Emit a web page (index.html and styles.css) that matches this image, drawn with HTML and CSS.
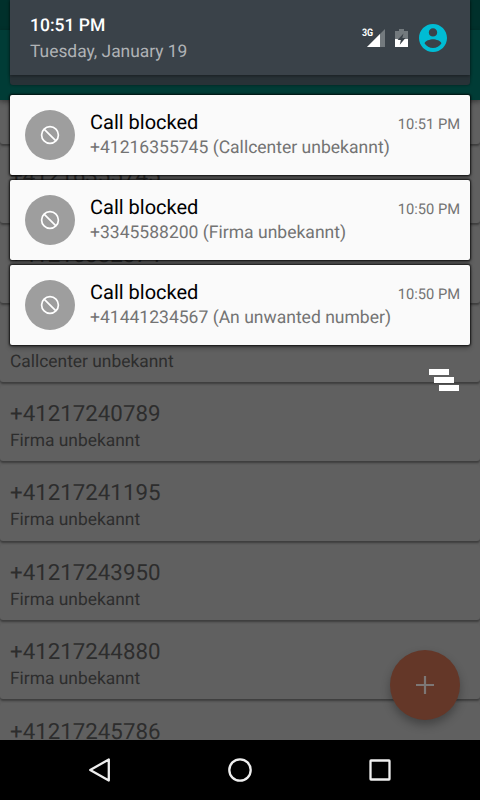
FILE: index.html
```
<!DOCTYPE HTML>
<html>
	<head>
		<title>Call Blocker</title>
		<meta charset="UTF-8">
		<link rel="stylesheet" href="styles.css">
	</head>

	<body>
		<div class="app">
			<div class="status-strip"></div>
			<div class="toolbar"></div>
			<div class="list">
				<div class="entry"></div>
				<div class="entry">
					<div class="number">+41216355745</div>
				</div>
				<div class="entry">
					<div class="number">+41216382374</div>
				</div>
				<div class="entry">
					<div class="number"></div>
					<div class="name">Callcenter unbekannt</div>
				</div>
				<div class="entry">
					<div class="number">+41217240789</div>
					<div class="name">Firma unbekannt</div>
				</div>
				<div class="entry">
					<div class="number">+41217241195</div>
					<div class="name">Firma unbekannt</div>
				</div>
				<div class="entry">
					<div class="number">+41217243950</div>
					<div class="name">Firma unbekannt</div>
				</div>
				<div class="entry">
					<div class="number">+41217244880</div>
					<div class="name">Firma unbekannt</div>
				</div>
				<div class="entry">
					<div class="number">+41217245786</div>
				</div>
			</div>
			<div class="fab">
				<svg width="18" height="18" viewBox="0 0 18 18"><path d="M9 0v18M0 9h18" stroke="#7d7775" stroke-width="2.2"/></svg>
			</div>
		</div>

		<!-- notification shade -->
		<div class="shade">
			<div class="header">
				<div class="header-main">
					<div class="clock">
						<div class="time">10:51 PM</div>
						<div class="date">Tuesday, January 19</div>
					</div>
					<div class="icons">
						<span class="network">3G</span>
						<svg class="signal" width="18" height="18" viewBox="0 0 18 18">
							<path d="M18 0V18H0z" fill="#737a7e"/>
							<path d="M13 5V18H0z" fill="#fff"/>
						</svg>
						<svg class="battery" width="13" height="18" viewBox="0 0 13 18">
							<path d="M0 2h4V0h5v2h4v8H0z" fill="#737a7e"/>
							<path d="M0 10h13v8H0z" fill="#fff"/>
							<path d="M8.5 4.5L2.5 11h3.3L4.8 15.8 10.5 9H7.3z" fill="#3a4249"/>
						</svg>
						<svg class="user" width="28" height="28" viewBox="2 2 20 20">
							<path fill="#00bcd4" d="M12 2C6.48 2 2 6.48 2 12s4.48 10 10 10 10-4.48 10-10S17.52 2 12 2zm0 3c1.66 0 3 1.34 3 3s-1.34 3-3 3-3-1.34-3-3 1.34-3 3-3zm0 14.2c-2.5 0-4.71-1.28-6-3.22.03-1.99 4-3.08 6-3.08 1.99 0 5.97 1.09 6 3.08-1.29 1.94-3.5 3.22-6 3.22z"/>
						</svg>
					</div>
				</div>
			</div>

			<div class="notification">
				<div class="badge">
					<svg width="20" height="20" viewBox="0 0 20 20"><circle cx="10" cy="10" r="8.4"/><path d="M4.1 4.1L15.9 15.9"/></svg>
				</div>
				<div class="message">
					<div class="title">Call blocked</div>
					<div class="text">+41216355745 (Callcenter unbekannt)</div>
				</div>
				<div class="when">10:51 PM</div>
			</div>
			<div class="notification">
				<div class="badge">
					<svg width="20" height="20" viewBox="0 0 20 20"><circle cx="10" cy="10" r="8.4"/><path d="M4.1 4.1L15.9 15.9"/></svg>
				</div>
				<div class="message">
					<div class="title">Call blocked</div>
					<div class="text">+3345588200 (Firma unbekannt)</div>
				</div>
				<div class="when">10:50 PM</div>
			</div>
			<div class="notification">
				<div class="badge">
					<svg width="20" height="20" viewBox="0 0 20 20"><circle cx="10" cy="10" r="8.4"/><path d="M4.1 4.1L15.9 15.9"/></svg>
				</div>
				<div class="message">
					<div class="title">Call blocked</div>
					<div class="text">+41441234567 (An unwanted number)</div>
				</div>
				<div class="when">10:50 PM</div>
			</div>

			<svg class="dismiss" width="30" height="22" viewBox="0 0 30 22">
				<path d="M0 0h20v6H0zM5 8h20v6H5zM10 16h20v6H10z" fill="#fff"/>
			</svg>
		</div>

		<div class="navbar">
			<svg width="24" height="26" viewBox="0 0 24 26"><path d="M20.8 2.5V23.5L2.2 13z"/></svg>
			<svg width="26" height="26" viewBox="0 0 26 26"><circle cx="13" cy="13" r="10.7"/></svg>
			<svg width="24" height="26" viewBox="0 0 24 26"><rect x="2.5" y="3.5" width="19" height="19" rx="0.5"/></svg>
		</div>
	</body>
</html>
```
FILE: styles.css
```
* {
	box-sizing: border-box;
}
body {
	margin: 0;
	width: 480px;
	height: 800px;
	position: relative;
	overflow: hidden;
	background: #000;
	font-family: Roboto, sans-serif;
	text-rendering: geometricPrecision;
}
svg {
	display: block;
}

/* dimmed app behind the shade */
.app {
	height: 740px;
	overflow: hidden;
	background: #5e5e5e;
}
.status-strip {
	height: 30px;
	background: #00302b;
}
.toolbar {
	height: 70px;
	background: #003c36;
	box-shadow: 0 2px 5px rgba(0, 0, 0, 0.4);
	position: relative;
}
.entry {
	height: 75.35px;
	margin-bottom: 4px;
	padding: 15.1px 10px 0;
	border-radius: 3px;
	background: #606060;
	box-shadow: 0 2px 2px rgba(0, 0, 0, 0.35);
	color: #2d2d2d;
}
.entry:first-child {
	height: 44px;
}
.number {
	height: 27px;
	font-size: 22.3px;
	line-height: 27px;
}
.name {
	font-size: 17.4px;
	line-height: 26px;
}
.fab {
	position: absolute;
	left: 390px;
	top: 650px;
	width: 70px;
	height: 70px;
	border-radius: 50%;
	display: flex;
	align-items: center;
	justify-content: center;
	background: #643728;
	box-shadow: 0 5px 10px rgba(0, 0, 0, 0.3);
}

.shade {
	position: absolute;
	left: 10px;
	top: 0;
	width: 460px;
	display: flex;
	flex-direction: column;
	gap: 5px;
}
.header {
	height: 85px;
	margin-bottom: 5px;
	border-radius: 0 0 3px 3px;
	background: #283237;
	box-shadow: 0 0 3px rgba(0, 0, 0, 0.5);
}
.header-main {
	height: 75px;
	padding: 13px 23px 0 20px;
	display: flex;
	justify-content: space-between;
	background: #3a4249;
	box-shadow: 0 1px 3px rgba(0, 0, 0, 0.4);
}
.time {
	padding-top: 1px;
	font-size: 17.5px;
	line-height: 25px;
	font-weight: 500;
	color: #fff;
}
.date {
	font-size: 17.4px;
	line-height: 26px;
	color: #b0b3b6;
}
.icons {
	display: flex;
	height: 49px;
	align-items: center;
}
.network {
	font-size: 10.5px;
	font-weight: bold;
	line-height: 10px;
	margin: 0 -7px 9px 0;
	transform: scaleX(0.85);
	color: #fff;
	position: relative;
}
.battery {
	margin: 0 11px 0 10px;
}

.notification {
	height: 80px;
	padding: 15px 10px 0 15px;
	display: flex;
	border-radius: 2px;
	background: #fafafa;
	box-shadow: 0 0 2px 1px rgba(0, 0, 0, 0.75), 0 3px 5px rgba(0, 0, 0, 0.3);
}
.badge {
	width: 50px;
	height: 50px;
	border-radius: 50%;
	display: flex;
	align-items: center;
	justify-content: center;
	background: #9e9e9e;
}
.badge svg {
	fill: none;
	stroke: #fff;
	stroke-width: 1.7;
}
.message {
	flex: 1;
	margin-left: 15px;
	white-space: nowrap;
}
.title {
	font-size: 20px;
	line-height: 24px;
	color: #000;
}
.text {
	padding-top: 1px;
	font-size: 17.55px;
	line-height: 26px;
	color: #737373;
}
.when {
	font-size: 14.7px;
	line-height: 28px;
	color: #737373;
}
.dismiss {
	align-self: flex-end;
	margin: 19px 11px 0 0;
}

.navbar {
	height: 60px;
	padding: 0 88px;
	display: flex;
	align-items: center;
	justify-content: space-between;
}
.navbar svg {
	fill: none;
	stroke: #eee;
	stroke-width: 2.3;
	stroke-linejoin: round;
}
```
